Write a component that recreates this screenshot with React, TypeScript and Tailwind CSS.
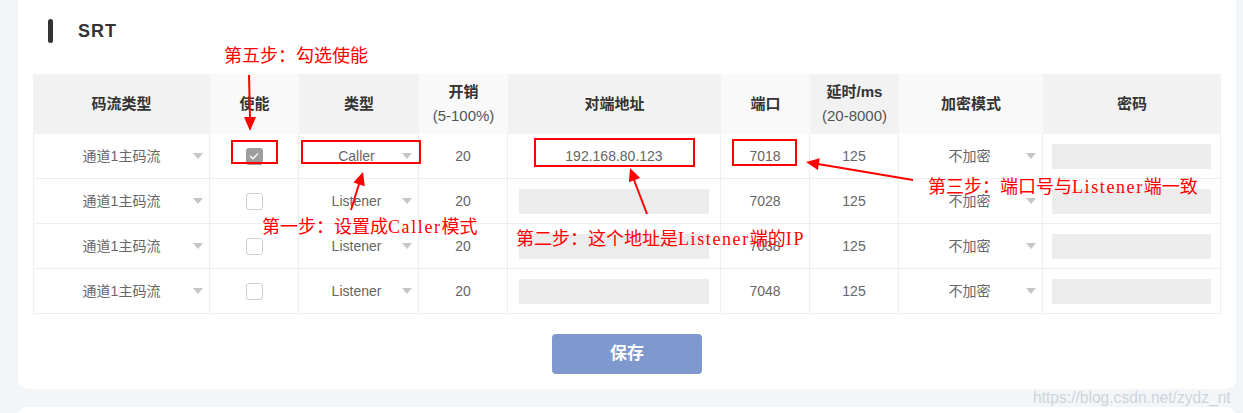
const cols = "grid grid-cols-[177px_89px_120px_89px_213px_89px_89px_144px_178px]";

const headers: { title: string; sub?: string }[] = [
  { title: "码流类型" },
  { title: "使能" },
  { title: "类型" },
  { title: "开销", sub: "(5-100%)" },
  { title: "对端地址" },
  { title: "端口" },
  { title: "延时/ms", sub: "(20-8000)" },
  { title: "加密模式" },
  { title: "密码" },
];

const rows = [
  { checked: true, type: "Caller", ip: "192.168.80.123", port: "7018" },
  { checked: false, type: "Listener", ip: "", port: "7028" },
  { checked: false, type: "Listener", ip: "", port: "7038" },
  { checked: false, type: "Listener", ip: "", port: "7048" },
];

function Caret() {
  return (
    <span className="h-0 w-0 shrink-0 border-x-[5px] border-t-[6px] border-x-transparent border-t-[#c6c6c6]" />
  );
}

function Select({ value, pl }: { value: string; pl: string }) {
  return (
    <div className={`flex h-full items-center pr-[6px] ${pl}`}>
      <span className="flex-1 text-center">{value}</span>
      <Caret />
    </div>
  );
}

function Checkbox({ checked }: { checked: boolean }) {
  if (checked) {
    return (
      <span className="grid h-[17px] w-[17px] place-items-center rounded-[3px] bg-[#9d9d9d]">
        <svg viewBox="0 0 12 12" className="h-[12px] w-[12px]" fill="none" stroke="#fff" strokeWidth="1.3" strokeLinecap="round" strokeLinejoin="round">
          <path d="M2.3 6.2 5 8.8 9.8 3.6" />
        </svg>
      </span>
    );
  }
  return <span className="h-[17px] w-[17px] rounded-[3px] border border-[#cfcfcf] bg-white" />;
}

const cell = "h-[45px] border-b border-r border-[#eeeeee] text-[14px] text-[#666]";
const latin = "tracking-[1.6px]";

function Annotations() {
  return (
    <>
      <div className="pointer-events-none absolute left-[231px] top-[140px] h-[24px] w-[47px] border-2 border-[#f00]" />
      <div className="pointer-events-none absolute left-[301px] top-[140px] h-[24px] w-[120px] border-2 border-[#f00]" />
      <div className="pointer-events-none absolute left-[534px] top-[138px] h-[29px] w-[161px] border-2 border-[#f00]" />
      <div className="pointer-events-none absolute left-[732px] top-[139px] h-[27px] w-[65px] border-2 border-[#f00]" />

      <svg className="pointer-events-none absolute left-0 top-0" width="1243" height="413">
        <g stroke="#f00" strokeWidth="2" fill="#f00">
          <line x1="249" y1="75" x2="250" y2="118" />
          <polygon points="244,117 256,117 250,131" stroke="none" />
          <line x1="351" y1="210" x2="359" y2="184" />
          <polygon points="364.8,186.2 353.4,182.6 363,172" stroke="none" />
          <line x1="647" y1="214" x2="634" y2="180" />
          <polygon points="640.1,178.1 628.9,182.3 630,168" stroke="none" />
          <line x1="913" y1="180" x2="818" y2="164" />
          <polygon points="819.8,158.3 817.8,170.1 806,162" stroke="none" />
        </g>
      </svg>

      <div className="pointer-events-none absolute left-0 top-0 whitespace-nowrap font-['Liberation_Serif','Noto_Sans_CJK_SC',serif] text-[18px] leading-none text-[#f00]">
        <span className="absolute left-[224px] top-[47px]">第五步：勾选使能</span>
        <span className="absolute left-[262px] top-[218px]">
          第一步：设置成<span className={latin}>Caller</span>模式
        </span>
        <span className="absolute left-[516px] top-[230px]">
          第二步：这个地址是<span className={latin}>Listener</span>端的<span className={latin}>IP</span>
        </span>
        <span className="absolute left-[928px] top-[178px]">
          第三步：端口号与<span className={latin}>Listener</span>端一致
        </span>
      </div>
    </>
  );
}

export default function App() {
  return (
    <div className="relative h-[413px] w-[1243px] overflow-hidden bg-[#f2f6f9] pl-[18px] font-['Liberation_Sans','Noto_Sans_CJK_SC',sans-serif]">
      <div className="h-[389px] w-[1218px] rounded-b-[10px] bg-white px-[15px] pt-[19px]">
        <div className="flex h-[24px] items-center pl-[15px]">
          <span className="h-[24px] w-[5px] rounded-full bg-[#333]" />
          <span className="ml-[25px] text-[18px] font-bold tracking-[1px] text-[#333]">SRT</span>
        </div>

        <div className="mt-[31px] w-[1188px]">
          <div className={`${cols} h-[60px]`}>
            {headers.map((h, i) => (
              <div
                key={h.title}
                className={`flex flex-col items-center justify-center text-[15px] ${i % 2 === 0 ? "bg-[#f2f2f2]" : "bg-[#f9f9f9]"}`}
              >
                <span className="font-bold leading-[24px] text-[#333]">{h.title}</span>
                {h.sub && <span className="leading-[24px] text-[#555]">{h.sub}</span>}
              </div>
            ))}
          </div>

          {rows.map((r, i) => (
            <div key={i} className={cols}>
              <div className={`${cell} border-l`}>
                <Select value="通道1主码流" pl="pl-[16px]" />
              </div>
              <div className={`${cell} flex items-center justify-center`}>
                <Checkbox checked={r.checked} />
              </div>
              <div className={cell}>
                <Select value={r.type} pl="pl-[12px]" />
              </div>
              <div className={`${cell} flex items-center justify-center`}>20</div>
              <div className={`${cell} flex items-center justify-center px-[11px]`}>
                {r.ip ? (
                  <span>{r.ip}</span>
                ) : (
                  <span className="h-[25px] w-full bg-[#ececec]" />
                )}
              </div>
              <div className={`${cell} flex items-center justify-center`}>{r.port}</div>
              <div className={`${cell} flex items-center justify-center`}>125</div>
              <div className={cell}>
                <Select value="不加密" pl="pl-[14px]" />
              </div>
              <div className={`${cell} flex items-center px-[9px]`}>
                <span className="h-[25px] w-full bg-[#ececec]" />
              </div>
            </div>
          ))}
        </div>

        <div className="mt-[20px] flex justify-center">
          <button className="h-[40px] w-[150px] rounded-[4px] bg-[#7f99cf] text-[17px] font-bold text-white">
            保存
          </button>
        </div>
      </div>

      <div className="mt-[18px] h-[20px] w-[1218px] rounded-t-[10px] bg-white" />

      <span className="pointer-events-none absolute left-[1033px] top-[386px] whitespace-nowrap text-[15.6px] text-[#cfd4d9]">
        https://blog.csdn.net/zydz_nt
      </span>

      <Annotations />
    </div>
  );
}
